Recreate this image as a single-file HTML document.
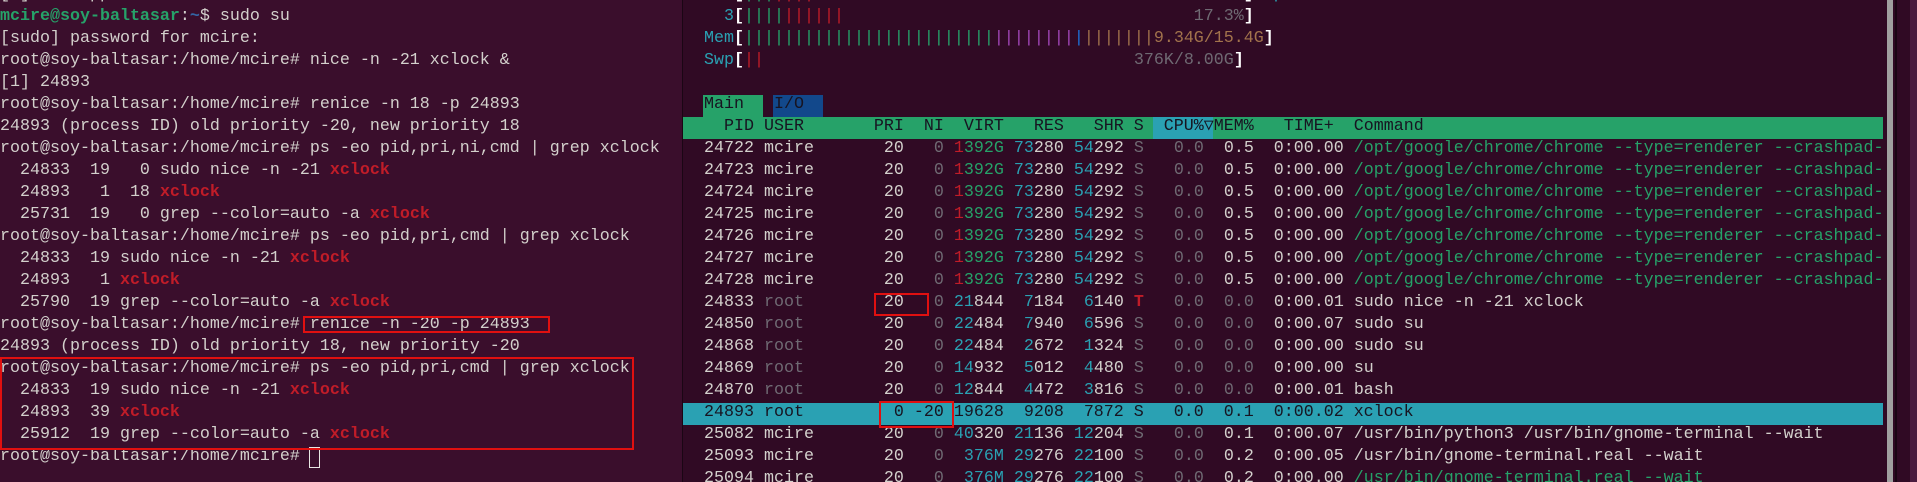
<!DOCTYPE html>
<html><head><meta charset="utf-8">
<style>
html,body{margin:0;padding:0}
body{width:1917px;height:482px;overflow:hidden;position:relative;background:#300a24;font-family:"Liberation Mono",monospace;font-size:16.667px;}
pre{margin:0;position:absolute;line-height:22px;font-family:inherit;font-size:inherit;white-space:pre;color:#d3d0cc}
#left{left:0;top:0;width:682px;height:482px;background:#3a0e2c;position:absolute;overflow:hidden}
#div{left:682px;top:0;width:1px;height:482px;background:#1a0614;position:absolute}
#right{left:683px;top:0;width:1204px;height:482px;position:absolute;overflow:hidden}
.g{color:#26a269;font-weight:bold}.b{color:#3465a4;font-weight:bold}.r{color:#c01c28;font-weight:bold}
.c{color:#2aa1b3}.gr{color:#26a269}.rd{color:#c01c28}.gy{color:#6f6a73}.w{color:#e8e6e3}
.pu{color:#a347ba}.bl{color:#1c71d8}.br{color:#a2734c}.wb{color:#fff;font-weight:bold}
.box{position:absolute;border:2px solid #e01010;box-sizing:border-box}
.hl{position:absolute;left:0;width:1200px;height:22px}
</style></head><body>
<div id="left">
<pre style="left:0;top:-16px">[1]+  Stopped                 sudo nice -n -21 xclock
<span class="g">mcire@soy-baltasar</span>:<span class="b">~</span>$ sudo su
[sudo] password for mcire: 
root@soy-baltasar:/home/mcire# nice -n -21 xclock &amp;
[1] 24893
root@soy-baltasar:/home/mcire# renice -n 18 -p 24893
24893 (process ID) old priority -20, new priority 18
root@soy-baltasar:/home/mcire# ps -eo pid,pri,ni,cmd | grep xclock
  24833  19   0 sudo nice -n -21 <span class="r">xclock</span>
  24893   1  18 <span class="r">xclock</span>
  25731  19   0 grep --color=auto -a <span class="r">xclock</span>
root@soy-baltasar:/home/mcire# ps -eo pid,pri,cmd | grep xclock
  24833  19 sudo nice -n -21 <span class="r">xclock</span>
  24893   1 <span class="r">xclock</span>
  25790  19 grep --color=auto -a <span class="r">xclock</span>
root@soy-baltasar:/home/mcire# renice -n -20 -p 24893
24893 (process ID) old priority 18, new priority -20
root@soy-baltasar:/home/mcire# ps -eo pid,pri,cmd | grep xclock
  24833  19 sudo nice -n -21 <span class="r">xclock</span>
  24893  39 <span class="r">xclock</span>
  25912  19 grep --color=auto -a <span class="r">xclock</span>
root@soy-baltasar:/home/mcire# </pre>
<div style="position:absolute;left:309px;top:447px;width:11px;height:21px;border:1px solid #e8e6e3;box-sizing:border-box"></div>
<div class="box" style="left:303px;top:316px;width:247px;height:17px"></div>
<div class="box" style="left:0;top:357px;width:634px;height:93px"></div>
</div>
<div id="div"></div>
<div id="right">
<div style="position:absolute;left:20px;top:95px;width:60px;height:22px;background:#26a269"></div>
<div style="position:absolute;left:90px;top:95px;width:50px;height:22px;background:#12488b"></div>
<div class="hl" style="top:117px;background:#26a269"></div>
<div style="position:absolute;left:470px;top:117px;width:60px;height:22px;background:#2aa1b3"></div>
<div class="hl" style="top:403px;background:#2aa1b3"></div>
<pre style="left:1px;top:-16px">    <span class="c">2</span><span class="wb">[</span><span class="gr">|||</span><span class="rd">||||</span>                                      <span class="gy">15.2%</span><span class="wb">]</span> <span class="c">Uptime: <b>01:25:16</b></span>
    <span class="c">3</span><span class="wb">[</span><span class="gr">||||</span><span class="rd">||||||</span>                                   <span class="gy">17.3%</span><span class="wb">]</span>
  <span class="c">Mem</span><span class="wb">[</span><span class="gr">|||||||||||||||||||||||||</span><span class="pu">||||||||</span><span class="bl">|</span><span class="br">|||||||9.34G/15.4G</span><span class="wb">]</span>
  <span class="c">Swp</span><span class="wb">[</span><span class="rd">||</span>                                     <span class="gy">376K/8.00G</span><span class="wb">]</span>

  <span style="color:#171421">Main</span>   <span style="color:#171421">I/O</span>
<span style="color:#171421">    PID USER       PRI  NI  VIRT   RES   SHR S  CPU%▽MEM%   TIME+  Command</span>
  24722 mcire       20   <span class="gy">0</span> <span class="rd">1</span><span class="gr">392G</span> <span class="c">73</span>280 <span class="c">54</span>292 <span class="gy">S</span>   <span class="gy">0.0</span>  0.5  0:00.00 <span class="gr">/opt/google/chrome/chrome --type=renderer --crashpad-</span>
  24723 mcire       20   <span class="gy">0</span> <span class="rd">1</span><span class="gr">392G</span> <span class="c">73</span>280 <span class="c">54</span>292 <span class="gy">S</span>   <span class="gy">0.0</span>  0.5  0:00.00 <span class="gr">/opt/google/chrome/chrome --type=renderer --crashpad-</span>
  24724 mcire       20   <span class="gy">0</span> <span class="rd">1</span><span class="gr">392G</span> <span class="c">73</span>280 <span class="c">54</span>292 <span class="gy">S</span>   <span class="gy">0.0</span>  0.5  0:00.00 <span class="gr">/opt/google/chrome/chrome --type=renderer --crashpad-</span>
  24725 mcire       20   <span class="gy">0</span> <span class="rd">1</span><span class="gr">392G</span> <span class="c">73</span>280 <span class="c">54</span>292 <span class="gy">S</span>   <span class="gy">0.0</span>  0.5  0:00.00 <span class="gr">/opt/google/chrome/chrome --type=renderer --crashpad-</span>
  24726 mcire       20   <span class="gy">0</span> <span class="rd">1</span><span class="gr">392G</span> <span class="c">73</span>280 <span class="c">54</span>292 <span class="gy">S</span>   <span class="gy">0.0</span>  0.5  0:00.00 <span class="gr">/opt/google/chrome/chrome --type=renderer --crashpad-</span>
  24727 mcire       20   <span class="gy">0</span> <span class="rd">1</span><span class="gr">392G</span> <span class="c">73</span>280 <span class="c">54</span>292 <span class="gy">S</span>   <span class="gy">0.0</span>  0.5  0:00.00 <span class="gr">/opt/google/chrome/chrome --type=renderer --crashpad-</span>
  24728 mcire       20   <span class="gy">0</span> <span class="rd">1</span><span class="gr">392G</span> <span class="c">73</span>280 <span class="c">54</span>292 <span class="gy">S</span>   <span class="gy">0.0</span>  0.5  0:00.00 <span class="gr">/opt/google/chrome/chrome --type=renderer --crashpad-</span>
  24833 <span class="gy">root</span>        20   <span class="gy">0</span> <span class="c">21</span>844  <span class="c">7</span>184  <span class="c">6</span>140 <span class="r">T</span>   <span class="gy">0.0</span>  <span class="gy">0.0</span>  0:00.01 sudo nice -n -21 xclock
  24850 <span class="gy">root</span>        20   <span class="gy">0</span> <span class="c">22</span>484  <span class="c">7</span>940  <span class="c">6</span>596 <span class="gy">S</span>   <span class="gy">0.0</span>  <span class="gy">0.0</span>  0:00.07 sudo su
  24868 <span class="gy">root</span>        20   <span class="gy">0</span> <span class="c">22</span>484  <span class="c">2</span>672  <span class="c">1</span>324 <span class="gy">S</span>   <span class="gy">0.0</span>  <span class="gy">0.0</span>  0:00.00 sudo su
  24869 <span class="gy">root</span>        20   <span class="gy">0</span> <span class="c">14</span>932  <span class="c">5</span>012  <span class="c">4</span>480 <span class="gy">S</span>   <span class="gy">0.0</span>  <span class="gy">0.0</span>  0:00.00 su
  24870 <span class="gy">root</span>        20   <span class="gy">0</span> <span class="c">12</span>844  <span class="c">4</span>472  <span class="c">3</span>816 <span class="gy">S</span>   <span class="gy">0.0</span>  <span class="gy">0.0</span>  0:00.01 bash
<span style="color:#171421">  24893 root         0 -20 19628  9208  7872 S   0.0  0.1  0:00.02 xclock</span>
  25082 mcire       20   <span class="gy">0</span> <span class="c">40</span>320 <span class="c">21</span>136 <span class="c">12</span>204 <span class="gy">S</span>   <span class="gy">0.0</span>  0.1  0:00.07 /usr/bin/python3 /usr/bin/gnome-terminal --wait
  25093 mcire       20   <span class="gy">0</span>  <span class="c">376M</span> <span class="c">29</span>276 <span class="c">22</span>100 <span class="gy">S</span>   <span class="gy">0.0</span>  0.2  0:00.05 /usr/bin/gnome-terminal.real --wait
  25094 mcire       20   <span class="gy">0</span>  <span class="c">376M</span> <span class="c">29</span>276 <span class="c">22</span>100 <span class="gy">S</span>   <span class="gy">0.0</span>  0.2  0:00.00 <span class="gr">/usr/bin/gnome-terminal.real --wait</span></pre>
<div class="box" style="left:191px;top:293px;width:55px;height:23px"></div>
<div class="box" style="left:196px;top:401px;width:75px;height:27px"></div>
</div>
<div style="position:absolute;left:1887px;top:0;width:6px;height:482px;background:#a0a0a0"></div>
<div style="position:absolute;left:1895px;top:0;width:2px;height:482px;background:#1a0614"></div>
<div style="position:absolute;left:1910px;top:0;width:7px;height:482px;background:#4a1a3e"></div>
</body></html>
